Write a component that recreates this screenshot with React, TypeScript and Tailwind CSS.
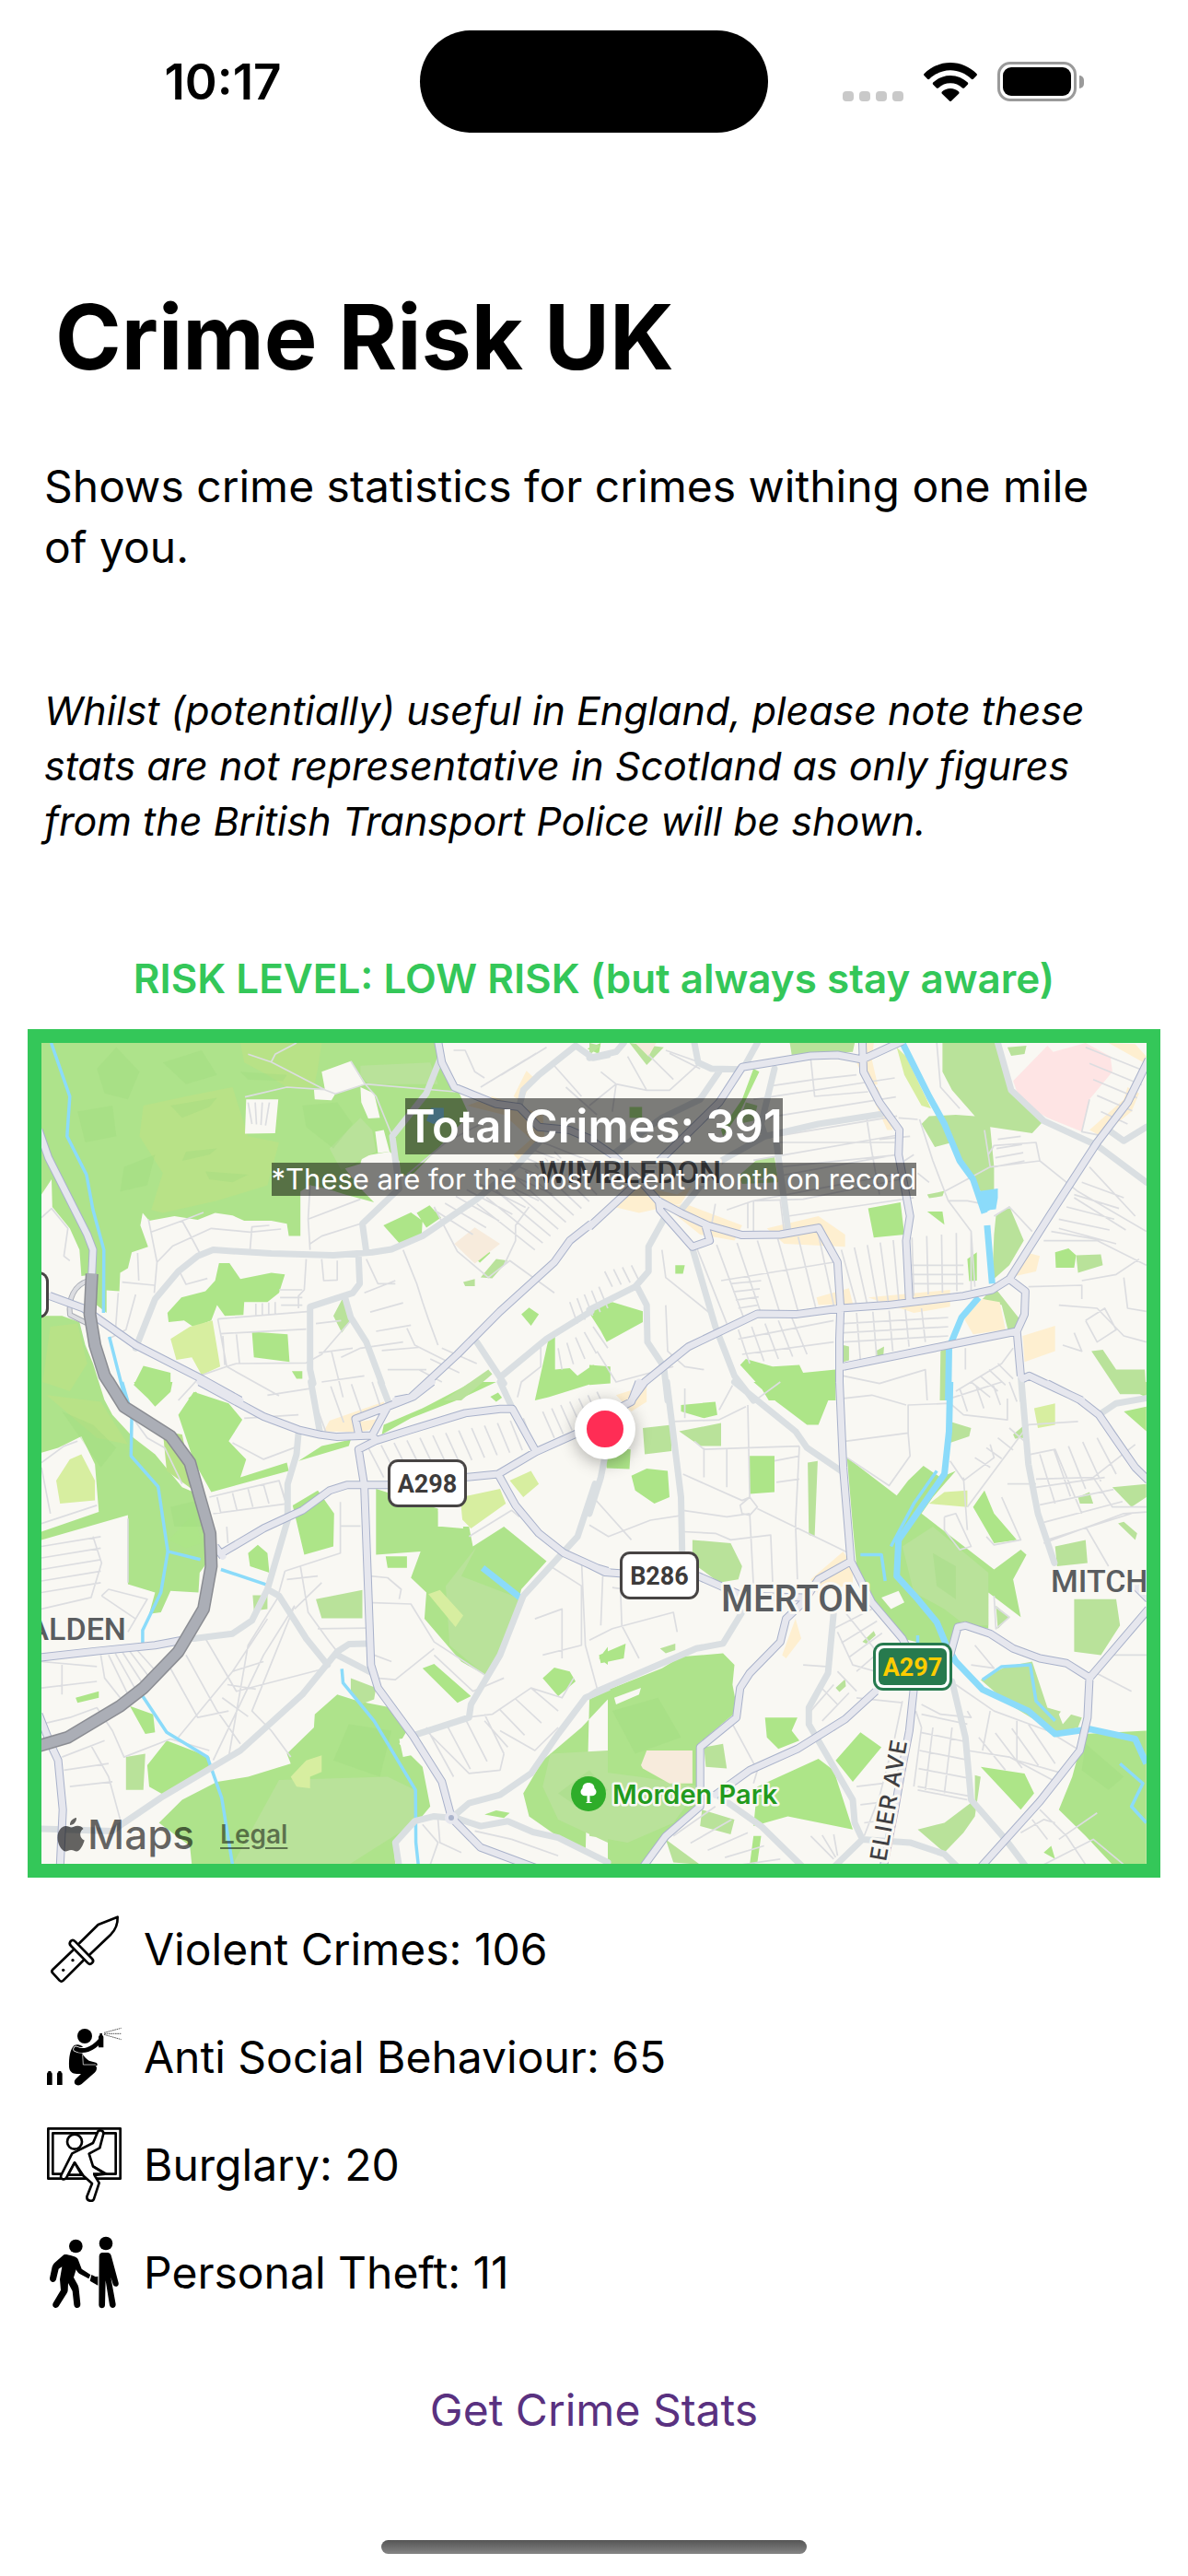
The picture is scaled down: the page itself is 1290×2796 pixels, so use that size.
import React from "react";

/* ---------- Map data: four tiles, each with its own local grid ---------- */

type Tile = "nw" | "ne" | "sw" | "se";
type Shape = [Tile, string];
type Hatch = [Tile, number, number, number, number, number, number, number, number, number];

const GRID: Record<Tile, [number, number, number, number]> = {
  nw: [0, 1020, 0.4209, 0.3333],
  ne: [640, 1020, 0.4145, 0.3333],
  sw: [0, 1500, 0.4209, 0.3571],
  se: [640, 1500, 0.4145, 0.3571],
};

function place(tile: Tile, x: number, y: number) {
  const [ox, oy, sx, sy] = GRID[tile];
  return `${(ox + x * sx).toFixed(1)} ${(oy + y * sy).toFixed(1)}`;
}

function toPath([tile, pts]: Shape, close = false) {
  const d = pts
    .split(" ")
    .map((p) => {
      const [x, y] = p.split(",").map(Number);
      return place(tile, x, y);
    })
    .join("L");
  return "M" + d + (close ? "Z" : "");
}

const lines = (list: Shape[]) => list.map((s) => toPath(s)).join("");
const areas = (list: Shape[]) => list.map((s) => toPath(s, true)).join("");

/* Rungs drawn between two edges: a→b on one side, c→d on the other. */
const rungs = (list: Hatch[]) =>
  list
    .map(([t, ax, ay, bx, by, cx, cy, dx, dy, n]) =>
      Array.from({ length: n }, (_, i) => {
        const k = n === 1 ? 0 : i / (n - 1);
        return (
          "M" + place(t, ax + (bx - ax) * k, ay + (by - ay) * k) +
          "L" + place(t, cx + (dx - cx) * k, cy + (dy - cy) * k)
        );
      }).join(""),
    )
    .join("");

const COMMON: Shape[] = [
  ["nw", "107,336 1128,336 1140,400 1185,500 1210,570 1130,680 1060,770 1035,765 1030,720 1005,690 935,705 930,730 890,745 930,810 965,855 890,830 845,812 800,800 775,820 775,965 745,965 740,925 700,915 630,915 600,898 555,890 510,912 450,900 385,915 368,890 362,930 382,1000 340,1018 330,1070 310,1085 308,1145 275,1142 275,1215 245,1185 240,1090 210,1095 205,1010 180,940 135,870 133,780 107,830"],
  ["nw", "107,1225 160,1225 205,1245 220,1320 240,1380 270,1500 107,1500"],
  ["sw", "107,0 245,0 290,100 345,170 400,220 470,320 510,340 545,480 540,540 515,580 512,640 440,635 415,700 385,705 400,640 330,615 330,405 107,480 107,455 255,395 245,250 210,165 150,200 107,215"],
  ["sw", "740,1130 810,1050 812,1010 870,950 925,970 1010,990 1050,1060 1030,1100 1090,1170 1110,1290 1075,1340 1015,1400 1020,1467 495,1467 490,1410 410,1340 470,1270 560,1215 640,1200 750,1160"],
  ["sw", "1568,965 1500,1050 1400,1150 1350,1250 1365,1320 1425,1370 1568,1452"],
  ["se", "0,965 50,935 190,870 240,835 350,825 380,860 375,920 388,1000 285,1100 290,1290 140,1467 60,1467 -10,1420"],
  ["sw", "970,325 1130,385 1130,440 1210,440 1220,500 1300,440 1410,545 1345,630 1330,700 1280,850 1250,890 1190,850 1095,720 1100,640 1060,595 1085,515 970,525"],
  ["se", "675,230 805,345 835,300 875,255 920,290 960,270 900,350 870,400 1060,570 1130,510 1145,525 1110,600 1130,715 1045,640 1045,750 985,740 960,760 940,850 855,790 820,780 740,670 700,560 690,440"],
  ["se", "1295,1070 1459,1060 1459,1467 1370,1467 1300,1380 1230,1300 1265,1200"],
];

const PARKS: Shape[] = [
  ["nw", "989,930 1060,888 1090,915 1088,960 1030,988"],
  ["nw", "1075,890 1108,865 1138,905 1100,938"],
  ["nw", "1210,1020 1240,988 1265,1020 1238,1052"],
  ["nw", "565,1053 592,1053 620,1105 700,1085 735,1090 720,1150 690,1180 630,1180 628,1222 580,1225 560,1190 545,1240 500,1262 475,1240 435,1245 432,1215 468,1165 530,1145 555,1110"],
  ["nw", "650,1277 742,1285 747,1375 655,1360"],
  ["nw", "345,1450 370,1388 440,1410 440,1470 395,1510"],
  ["nw", "753,1405 780,1405 780,1430 765,1430"],
  ["nw", "1345,1220 1365,1198 1390,1220 1370,1257"],
  ["nw", "1520,1215 1568,1190 1568,1310"],
  ["nw", "1415,1300 1432,1290 1432,1400 1470,1395 1490,1420 1530,1385 1568,1400 1568,1430 1415,1490 1380,1500"],
  ["nw", "485,1495 505,1472 530,1500"],
  ["nw", "1515,355 1550,336 1545,372"],
  ["ne", "0,1205 60,1180 140,1210 140,1245 45,1310"],
  ["ne", "0,1385 55,1390 55,1445 0,1450"],
  ["ne", "225,1060 250,1060 245,1088 225,1088"],
  ["ne", "430,420 445,430 395,560 350,640 345,620 400,520"],
  ["ne", "730,875 815,855 825,960 745,970"],
  ["ne", "885,885 925,885 930,928"],
  ["ne", "990,1040 1015,1018 1015,1110 995,1112"],
  ["ne", "1220,1018 1255,1005 1275,1028 1270,1068 1222,1068"],
  ["ne", "395,1385 410,1365 480,1390 550,1385 560,1410 645,1400 645,1500 470,1500 450,1460"],
  ["ne", "105,545 138,545 138,580 105,580"],
  ["sw", "460,100 500,30 590,65 625,115 590,180 635,235 620,290 740,245 745,270 545,335 500,240"],
  ["sw", "345,0 445,0 440,30 400,75"],
  ["sw", "985,160 1060,110 1190,50 1280,0 1220,0 1090,80 990,130"],
  ["sw", "770,240 830,195 905,175 900,195"],
  ["sw", "755,375 820,330 862,400 860,500 785,525"],
  ["sw", "435,480 500,400 520,490 480,505"],
  ["sw", "640,520 665,495 690,520 695,580 645,560"],
  ["sw", "995,530 1050,530 1050,565 1000,565"],
  ["sw", "1090,870 1120,857 1215,955 1180,975"],
  ["sw", "1400,900 1430,868 1470,880 1485,910 1440,955"],
  ["sw", "195,960 255,940 255,960 200,975"],
  ["sw", "335,985 395,1010 400,1065 375,1070"],
  ["sw", "380,1165 430,1090 540,1140 545,1180 430,1260 385,1230"],
  ["sw", "1250,1315 1280,1302 1315,1310 1300,1325"],
  ["sw", "1545,840 1568,805 1568,860"],
  ["sw", "1265,45 1285,32 1295,48 1280,60"],
  ["se", "420,225 485,225 485,335 420,340"],
  ["se", "110,285 150,263 205,270 210,350 170,370 120,330"],
  ["se", "430,0 645,0 600,130 570,130 490,60"],
  ["se", "240,70 330,60 335,100 300,110 240,90"],
  ["se", "1005,380 1035,330 1060,400 1120,480 1060,490"],
  ["se", "1400,90 1459,75 1459,150"],
  ["se", "460,1020 545,1020 530,1060 550,1090 495,1115 465,1080"],
  ["se", "645,1150 710,1065 765,1110 690,1215"],
  ["se", "440,1230 600,1145 640,1180 690,1360 520,1320 430,1350"],
  ["se", "1025,1170 1140,1190 1165,1250 1130,1300 1090,1250"],
  ["se", "430,1380 450,1380 440,1460 420,1467"],
  ["se", "25,830 95,795 90,840 30,855"],
  ["se", "1190,1430 1210,1410 1220,1450"],
  ["se", "40,200 108,205 105,265 45,262"],
  ["se", "1385,0 1459,0 1459,48"],
];

const SOFT: Shape[] = [
  ["nw", "860,1225 885,1165 905,1240 882,1280"],
  ["nw", "1240,1100 1280,1040 1310,1045 1270,1103"],
  ["nw", "1195,1115 1225,1105 1225,1128 1200,1128"],
  ["nw", "1145,1500 1260,1400 1270,1415 1190,1500"],
  ["nw", "930,410 1110,400 1130,470 950,470 930,440"],
  ["nw", "850,680 930,580 960,620 970,690 880,750"],
  ["nw", "500,610 560,560 610,640 530,650"],
  ["ne", "525,336 695,336 690,365 530,375"],
  ["ne", "105,336 195,350 150,408"],
  ["ne", "0,336 30,345 0,375"],
  ["ne", "925,336 1070,336 1100,480 1190,590 1160,630 1050,610 1060,740 1060,815 1025,820 990,760 950,660 905,675 870,600 890,575 960,570 1010,575 950,490 925,430"],
  ["ne", "410,530 440,540 430,590 390,600"],
  ["ne", "390,770 440,715 485,708 495,790 400,795"],
  ["ne", "1065,900 1100,868 1138,980 1100,1060 1055,1110 1060,960"],
  ["ne", "1275,1028 1340,1025 1345,1060 1280,1085"],
  ["ne", "1060,1130 1130,1240 1100,1290 1080,1190 1030,1170"],
  ["ne", "665,1320 680,1325 680,1370 665,1375"],
  ["ne", "750,1340 772,1325 770,1355 750,1360"],
  ["ne", "1315,1340 1345,1335 1380,1400 1455,1400 1459,1480 1390,1480"],
  ["ne", "920,1340 940,1330 935,1500 918,1500"],
  ["ne", "885,830 930,818 925,835 890,842"],
  ["ne", "1095,350 1145,345 1140,372 1105,378"],
  ["sw", "1230,500 1190,590 1345,660 1300,820 1250,890 1160,800 1150,620"],
  ["sw", "720,1210 1000,1200 1070,1240 1070,1340 900,1467 600,1467"],
  ["sw", "815,660 935,632 935,718 830,718"],
  ["sw", "652,648 690,648 690,690 655,695"],
  ["sw", "905,900 970,930 965,965 930,980 905,940"],
  ["sw", "325,1140 375,1130 370,1240 325,1240"],
  ["sw", "1420,1130 1568,1120 1568,1400 1440,1330 1400,1230"],
  ["se", "0,1180 130,1200 290,1230 220,1340 100,1400 0,1380"],
  ["se", "820,500 900,440 1045,580 1045,740 985,740 930,690 850,640"],
  ["se", "140,140 215,130 215,210 145,220"],
  ["se", "235,150 345,125 345,195 290,195"],
  ["se", "572,245 598,240 590,470 575,465"],
  ["se", "270,480 370,490 400,560 390,600 340,610 270,550"],
  ["se", "945,120 1000,140 995,165 945,185"],
  ["se", "1110,160 1135,135 1138,170 1115,172"],
  ["se", "1220,500 1300,480 1305,550 1225,560"],
  ["se", "1270,660 1380,660 1390,740 1340,830 1270,820"],
  ["se", "1370,320 1459,310 1459,350 1420,380"],
  ["se", "1385,430 1400,425 1435,460 1430,480"],
  ["se", "1280,350 1310,335 1320,370 1285,370"],
  ["se", "1025,905 1090,865 1160,850 1200,990 1290,1020 1280,1050 1220,1065 1100,980"],
  ["se", "860,1360 930,1340 1010,1270 1010,1195 1025,1200 1010,1320 980,1370 930,1430"],
  ["se", "185,810 225,795 225,815 200,825"],
  ["se", "715,790 745,757 750,770 725,795"],
  ["se", "645,930 670,903 672,925 655,942"],
  ["se", "295,1300 380,1330 370,1375 290,1350"],
  ["se", "300,1110 350,1100 360,1175 305,1170"],
  ["se", "200,1390 290,1467 220,1460"],
  ["se", "1065,680 1100,715 1070,750"],
];

const OLIVE: Shape[] = [
  ["nw", "620,336 830,336 820,420 810,480 740,480 690,440 630,400"],
  ["nw", "370,540 480,510 600,480 640,640 720,660 690,800 560,850 420,890 390,880 420,760 360,640"],
  ["nw", "130,1260 200,1250 225,1380 180,1470 110,1440"],
  ["sw", "120,40 260,60 330,190 250,170"],
  ["sw", "420,150 470,160 500,330 430,270"],
];

const LIME: Shape[] = [
  ["nw", "440,1300 490,1260 548,1240 568,1390 520,1418 495,1360 455,1368"],
  ["ne", "805,350 830,380 895,550 870,540 825,440"],
  ["sw", "145,300 180,235 210,220 245,300 245,360 155,370"],
  ["sw", "1105,645 1135,632 1195,710 1175,745"],
  ["sw", "1190,350 1290,325 1305,370 1215,445 1190,415"],
  ["sw", "1315,300 1370,270 1390,310 1350,350"],
  ["sw", "750,1200 790,1150 830,1135 830,1185 800,1200 800,1235 765,1230"],
  ["se", "890,370 930,335 990,330 990,380"],
  ["se", "1165,80 1220,65 1220,130 1175,140"],
];

const BUILT: Shape[] = [
  ["nw", "830,430 905,395 940,470 865,502 855,523 812,520 810,488 838,485"],
  ["nw", "635,520 718,520 710,630 632,632"],
  ["nw", "930,480 965,500 980,580 950,582 932,530"],
  ["nw", "968,625 990,620 1005,690 975,695"],
  ["sw", "1130,390 1190,385 1195,445 1140,440"],
  ["sw", "1030,1085 1060,1080 1080,1130 1040,1140"],
  ["se", "65,960 135,930 130,950 70,980"],
  ["se", "765,655 810,635 825,670 790,690"],
  ["se", "1230,1010 1245,985 1270,1000 1240,1040"],
];

const SHOPS: Shape[] = [
  ["nw", "1325,510 1358,427 1378,450 1345,530"],
  ["nw", "1205,540 1270,510 1400,570 1405,640 1340,720 1325,700 1370,650 1300,570"],
  ["ne", "700,400 740,390 755,470 730,480"],
  ["ne", "715,336 745,336 740,400 715,390"],
  ["ne", "730,480 755,480 795,620 780,620"],
  ["ne", "65,870 120,800 230,830 270,800 240,860 130,890"],
  ["ne", "250,860 400,930 380,980 290,960 200,870"],
  ["ne", "465,940 600,900 670,960 670,1000 510,990"],
  ["ne", "595,1165 680,1135 690,1185 600,1190"],
  ["ne", "730,1165 945,1140 945,1195 850,1215"],
  ["ne", "975,1220 1030,1170 1075,1180 1090,1270 1005,1285"],
  ["ne", "1135,1290 1220,1257 1220,1340 1140,1375"],
  ["ne", "1150,1020 1180,1030 1170,1080 1100,1100"],
  ["ne", "1360,336 1430,340 1459,380 1459,405"],
  ["ne", "1410,480 1440,500 1420,560 1340,640 1310,620 1400,520"],
  ["sw", "835,150 850,118 990,60 1000,80 930,120 990,110 970,140 930,152"],
  ["se", "580,600 665,515 690,560 690,610 600,650"],
  ["se", "505,830 540,720 555,780 515,840"],
  ["se", "70,40 150,10 150,60 110,90"],
];

const SAND: Shape[] = [
  ["nw", "1172,990 1225,937 1290,990 1225,1055"],
  ["se", "135,1165 150,1120 270,1120 270,1220 210,1220 140,1175"],
  ["ne", "120,336 175,336 155,380"],
];

const HOSPITAL: Shape[] = [["ne", "1110,460 1200,345 1215,365 1300,336 1365,380 1370,430 1310,520 1290,625 1200,580 1130,530"]];

const STREAMS: Shape[] = [
  ["nw", "132,336 180,510 173,640 223,765 240,880 268,1010 267,1215"],
  ["nw", "282,1293 322,1490"],
  ["sw", "315,0 340,100 338,225 408,318 433,515 415,640 368,755 368,795"],
  ["sw", "433,515 517,540"],
  ["sw", "570,570 690,617"],
  ["sw", "368,955 430,1065 535,1140 572,1265 600,1467"],
  ["sw", "882,872 885,915 965,1030 1072,1240 1073,1400 1079,1467"],
  ["se", "910,270 850,370 790,500"],
  ["se", "710,525 765,525 775,605"],
  ["se", "1030,905 1080,865 1155,860 1170,970 1220,1030"],
  ["se", "1390,1160 1450,1220 1420,1290 1459,1340"],
  ["se", "860,770 860,800"],
];

const RIVER: Shape[] = [
  ["ne", "820,336 890,510 930,600 970,720 1005,780 1035,890"],
  ["ne", "1042,930 1055,1120"],
  ["ne", "1020,1165 975,1230 955,1290 942,1330 940,1500"],
  ["se", "945,0 942,150 930,280 870,380 810,480 805,590 860,660 910,730 935,800 960,850 1030,935 1150,1000 1220,1070 1310,1055 1430,1085 1459,1160"],
  ["sw", "1245,565 1342,655"],
];

const POND: Shape[] = [["ne", "1015,820 1070,810 1070,840 1065,878 1050,880 1035,890"], ["nw", "1100,590 1112,548 1145,548 1145,590 1118,600"]];

const MOTORWAY: Shape[] = [
  ["nw", "237,1088 232,1220 245,1320 270,1420 290,1460"],
  ["sw", "278,-5 320,75 440,165 490,245 520,370 542,460 545,560 525,690 460,820 370,930 310,985 175,1080 100,1106"],
];

const MAJOR: Shape[] = [
  ["nw", "100,620 125,710 225,960 240,1010 237,1088"],
  ["nw", "128,1160 215,1200 350,1320 520,1430 620,1500"],
  ["sw", "515,0 680,105 770,145 825,160 870,167 960,162 1000,75 1065,45 1115,0"],
  ["sw", "925,155 917,112 1000,75"],
  ["sw", "960,162 970,178 925,205 940,315 957,860 975,930 1065,1075 1140,1215 1165,1325 1240,1415 1400,1485"],
  ["sw", "970,178 1060,145 1200,95 1290,82 1322,82 1383,212"],
  ["sw", "572,520 680,445 780,390 850,330 895,313 1000,313 1285,280 1383,212 1500,150 1560,140"],
  ["sw", "575,530 555,500"],
  ["sw", "1285,280 1330,375 1390,460 1455,520 1540,565 1568,575"],
  ["sw", "100,838 250,818 400,800 470,785"],
  ["sw", "100,1010 130,1100 150,1150 162,1300 155,1475"],
  ["nw", "1130,330 1140,400 1172,480 1280,535 1340,545 1390,610 1470,620 1525,650"],
  ["nw", "1020,1500 1060,1490 1180,1350 1290,1210 1430,1050 1470,980 1525,925"],
  ["ne", "0,650 60,700 130,780 180,850 240,890 310,930 400,962 500,960 600,938 650,1050 658,1200"],
  ["ne", "0,935 100,820 250,640 340,530 400,415 580,378 650,375 715,390 820,330"],
  ["ne", "715,330 718,430 760,530 812,620 810,700 840,900 830,980 838,1180"],
  ["ne", "110,1500 145,1440 200,1385 260,1325 440,1218 540,1220 658,1200 780,1190 980,1160 1055,1140 1100,1105 1210,890 1330,660 1410,530 1465,390"],
  ["ne", "658,1200 655,1300 655,1440"],
  ["ne", "1100,1105 1142,1145 1140,1220 1120,1275 940,1320 665,1390"],
  ["ne", "1120,1275 1130,1420"],
  ["ne", "1135,1430 1152,1420 1220,1460 1290,1500"],
  ["ne", "182,850 185,880 270,1000 315,980 305,935"],
  ["se", "0,135 60,90 110,60 130,0"],
  ["se", "655,0 665,260 685,545 740,670 820,780 850,850"],
  ["se", "0,555 40,578 80,582 285,590 340,618 400,650 560,655"],
  ["se", "685,545 600,600 560,670 515,720 500,790 420,885 395,930 385,1020 290,1110 290,1290 200,1380 140,1475"],
  ["se", "1200,5 1285,55 1335,100 1370,160 1430,260 1465,300"],
  ["se", "1465,690 1310,900 1305,1020 1285,1120 1180,1275 1025,1475"],
  ["se", "945,830 965,745 985,740 1050,765 1110,810 1180,840 1250,855 1312,900"],
  ["se", "850,930 838,1060 815,1200 800,1300 770,1475"],
  ["se", "750,940 670,1025 545,1115 420,1180 330,1255"],
  ["se", "1465,660 1430,620"],
];

const MEDIUM: Shape[] = [
  ["nw", "350,1330 400,1170 460,1080 510,1030 550,1010 700,1022 860,1028 960,1018 1010,1008 1090,965 1230,845 1330,740 1390,660"],
  ["nw", "945,1018 935,925 1030,810 1012,640 1100,500 1135,390"],
  ["nw", "925,1030 928,1120 910,1150 800,1195 800,1400 808,1445"],
  ["nw", "890,1165 905,1230 945,1310 985,1445"],
  ["nw", "1340,540 1350,490 1390,440 1485,345 1530,385 1568,375"],
  ["nw", "1230,1310 1290,1425 1300,1445"],
  ["nw", "1290,1425 1410,1300 1525,1210"],
  ["ne", "0,385 70,365 90,336"],
  ["ne", "275,336 285,400 320,420 400,422"],
  ["ne", "340,430 290,520 190,580 60,700"],
  ["ne", "440,336 405,415"],
  ["ne", "485,420 450,600 460,640"],
  ["ne", "240,880 345,720 460,640 600,600 765,568"],
  ["ne", "490,660 520,940"],
  ["ne", "195,910 155,1000 155,1080 120,1130 0,1205"],
  ["ne", "125,1130 150,1190 152,1310 195,1390 205,1500"],
  ["ne", "270,1005 330,1260 380,1420 430,1500"],
  ["ne", "1070,336 1105,490 1190,590 1330,670 1459,790"],
  ["ne", "1360,620 1400,655 1459,610"],
  ["ne", "1130,1420 1135,1500"],
  ["se", "1132,0 1150,250 1175,400 1218,550"],
  ["se", "203,0 240,350 243,515"],
  ["se", "380,0 540,150 570,200 665,275"],
  ["se", "40,230 30,290 0,400"],
  ["se", "400,700 350,795 280,810 20,940 0,955"],
  ["se", "640,700 625,885 575,990 575,1040 690,1270 695,1340 715,1390 840,1400 930,1435 965,1475"],
  ["se", "715,1390 640,1475"],
  ["se", "340,1260 450,1350 560,1475"],
  ["se", "950,910 985,1080 1000,1270 1090,1390 1145,1475"],
  ["se", "1335,100 1380,65 1465,48"],
  ["sw", "1535,310 1490,470 1350,650 1290,830 1215,980 1210,1020 1065,1075"],
  ["sw", "1568,930 1510,960 1440,1070 1370,1190 1290,1255 1210,1280 1170,1320"],
  ["sw", "1165,1325 1120,1320 1070,1335 1020,1400 1030,1475"],
  ["sw", "1175,1325 1240,1350 1310,1335 1375,1368 1440,1385 1568,1460"],
  ["sw", "770,155 765,220 742,310 742,420 690,630 650,725 600,765 500,780"],
  ["sw", "690,630 720,650 790,780 845,860"],
  ["sw", "945,795 900,797 870,820 780,950 620,1120 420,1260 320,1340"],
  ["sw", "320,1340 290,1365 107,1358"],
  ["sw", "870,830 960,885"],
  ["sw", "802,0 825,150"],
  ["sw", "982,0 1005,70"],
  ["sw", "1290,0 1322,80"],
];

const MINOR: Shape[] = [
  ["nw", "640,373 700,398 840,490 865,502 942,470 1175,495"],
  ["nw", "765,336 710,373 700,398"],
  ["nw", "632,512 740,480 838,488"],
  ["nw", "942,470 970,510 1012,640"],
  ["nw", "905,395 942,470"],
  ["nw", "1050,765 1150,660 1240,600"],
  ["nw", "107,905 133,875 175,940 165,1030 180,1045"],
  ["nw", "383,910 405,1050 398,1150"],
  ["nw", "405,1050 445,998 545,940 645,952 725,942"],
  ["nw", "390,952 470,915 525,888"],
  ["nw", "645,1010 650,935 695,930"],
  ["nw", "470,915 490,960 515,1020"],
  ["nw", "800,800 795,910 930,845"],
  ["nw", "795,910 800,1010"],
  ["nw", "800,990 830,965 930,925"],
  ["nw", "562,1235 800,1210"],
  ["nw", "562,1235 585,1390 610,1380 790,1378 830,1350 905,1240"],
  ["nw", "568,1283 790,1268"],
  ["nw", "585,1390 520,1418 460,1500"],
  ["nw", "585,1390 720,1485"],
  ["nw", "465,1085 480,1122 535,1103"],
  ["nw", "355,1020 358,1110"],
  ["nw", "315,1115 398,1125"],
  ["nw", "305,1150 298,1270"],
  ["nw", "350,1155 325,1270 280,1300"],
  ["nw", "790,1040 785,1140 770,1160 770,1200"],
  ["nw", "830,1040 835,1110 870,1108 870,1045"],
  ["nw", "1040,1010 1075,1120 1090,1180 1105,1235 1130,1320"],
  ["nw", "945,1040 975,1120 1020,1120"],
  ["nw", "1120,870 1180,1015 1260,1100 1315,1045 1430,1150"],
  ["nw", "1365,870 1330,930 1330,980 1300,1060"],
  ["nw", "880,1360 930,1330 1040,1310"],
  ["nw", "855,1340 885,1490"],
  ["nw", "1050,1265 1070,1320 1165,1380"],
  ["nw", "1170,360 1200,360 1225,430 1250,450"],
  ["nw", "1460,480 1540,570"],
  ["nw", "1430,410 1500,510"],
  ["nw", "1395,1325 1395,1390 1345,1440 1335,1490"],
  ["ne", "200,360 290,400 210,490 150,490 70,470 30,430"],
  ["ne", "0,540 70,470 60,560"],
  ["ne", "480,475 590,455 700,440"],
  ["ne", "580,390 590,510 730,495"],
  ["ne", "725,570 740,690 760,830"],
  ["ne", "490,660 800,660"],
  ["ne", "500,740 810,700"],
  ["ne", "430,850 560,845 815,780"],
  ["ne", "520,900 850,840"],
  ["ne", "345,1110 640,1050"],
  ["ne", "360,880 430,850 430,950"],
  ["ne", "865,585 900,720 940,850 1000,950 1010,1130"],
  ["ne", "860,585 810,580"],
  ["ne", "940,850 990,850 1030,860"],
  ["ne", "1035,620 1050,740 930,820"],
  ["ne", "1050,740 1180,720 1170,660 1060,670 1045,700"],
  ["ne", "1180,720 1280,820 1459,950"],
  ["ne", "1060,900 1100,870 1160,950"],
  ["ne", "1190,980 1330,980 1459,1060"],
  ["ne", "1290,1110 1380,1090 1440,1040"],
  ["ne", "1150,1130 1290,1125 1290,1170"],
  ["ne", "910,336 920,480 970,550"],
  ["ne", "190,1010 200,1100 330,1230"],
  ["ne", "200,1190 205,1340 250,1390 300,1400"],
  ["ne", "20,1340 70,1440 220,1390"],
  ["ne", "665,1420 760,1445 880,1400 885,1500"],
  ["ne", "985,1330 985,1400"],
  ["ne", "960,1470 1080,1380 1110,1330"],
  ["ne", "1230,1190 1330,1200 1400,1290 1459,1310"],
  ["ne", "1300,1240 1350,1200 1380,1270 1330,1310 1300,1240"],
  ["ne", "1240,1320 1290,1340 1270,1280"],
  ["ne", "1400,1100 1410,1200 1459,1210"],
  ["ne", "1310,520 1290,625 1350,640"],
  ["sw", "107,245 165,195 200,180"],
  ["sw", "107,260 130,400"],
  ["sw", "107,430 250,375"],
  ["sw", "330,415 330,610"],
  ["sw", "240,470 262,550 235,655 107,690"],
  ["sw", "262,650 280,630 380,660 350,720"],
  ["sw", "262,650 350,720 330,760"],
  ["sw", "330,90 380,170 425,200 470,310"],
  ["sw", "540,350 720,300 740,370 550,400"],
  ["sw", "585,440 588,490"],
  ["sw", "878,365 878,520 735,575"],
  ["sw", "878,438 930,438"],
  ["sw", "775,560 795,700 850,790 870,820"],
  ["sw", "820,750 945,748"],
  ["sw", "945,670 1060,675 1120,790 1250,890"],
  ["sw", "955,590 1000,595 1035,630 1030,660"],
  ["sw", "970,900 1020,905 1120,810"],
  ["sw", "965,830 1010,850"],
  ["sw", "735,575 720,640"],
  ["sw", "760,680 680,830 550,1150"],
  ["sw", "760,680 650,1000 700,1060 750,1140"],
  ["sw", "720,650 640,800 590,1140"],
  ["sw", "430,850 510,1020 590,1000"],
  ["sw", "480,830 560,1000"],
  ["sw", "530,780 610,940 840,870"],
  ["sw", "460,1080 600,880 690,720"],
  ["sw", "260,830 270,900 310,960"],
  ["sw", "107,850 250,865"],
  ["sw", "107,930 250,910"],
  ["sw", "160,860 160,950"],
  ["sw", "107,1040 180,1020 250,990 290,1060 320,1140 440,1085 540,1120"],
  ["sw", "160,1140 270,1090"],
  ["sw", "235,1105 280,1200 310,1330"],
  ["sw", "165,1180 280,1160"],
  ["sw", "180,1230 290,1215"],
  ["sw", "1100,1060 1210,1190 1290,1180 1300,1130"],
  ["sw", "1200,1020 1270,1010 1370,930 1450,960 1480,900"],
  ["sw", "1300,900 1220,940 1120,830"],
  ["sw", "1290,1060 1380,1120 1440,1050"],
  ["sw", "1210,470 1320,390 1340,410"],
  ["sw", "1500,540 1510,800 1540,930"],
  ["sw", "1420,560 1500,620 1500,800 1400,830"],
  ["sw", "1380,720 1450,690 1450,840"],
  ["sw", "1225,1365 1320,1390 1440,1440"],
  ["sw", "1090,1345 1130,1400 1110,1467"],
  ["sw", "1130,1330 1135,1400 1190,1430"],
  ["sw", "690,40 800,20"],
  ["sw", "630,110 770,100"],
  ["sw", "600,185 680,235 770,195"],
  ["se", "0,435 50,470 160,420 245,405"],
  ["se", "10,350 110,480"],
  ["se", "245,280 400,360 420,350 440,380 420,405 400,400 395,375 420,350"],
  ["se", "245,390 360,410 420,400"],
  ["se", "440,385 680,520"],
  ["se", "420,400 430,620"],
  ["se", "245,455 330,460 370,480 475,465 480,610"],
  ["se", "550,195 540,430 545,600"],
  ["se", "485,240 550,225"],
  ["se", "490,305 550,295"],
  ["se", "220,120 340,115 410,75"],
  ["se", "415,70 420,350"],
  ["se", "275,180 300,205 420,200 550,195"],
  ["se", "670,180 835,155 835,70 945,65"],
  ["se", "835,155 840,225 785,315 675,230"],
  ["se", "665,50 740,40 830,70"],
  ["se", "945,50 1080,0"],
  ["se", "945,65 980,100 1095,115 1095,50"],
  ["se", "945,240 980,300 1060,230 1050,190"],
  ["se", "980,290 990,450"],
  ["se", "930,410 960,400 1000,500 970,510 930,450 930,410"],
  ["se", "990,380 1150,130 1280,120"],
  ["se", "1155,220 1220,205 1290,400"],
  ["se", "1170,295 1320,290 1430,190"],
  ["se", "1320,290 1370,380 1459,380"],
  ["se", "1190,490 1400,400 1459,395"],
  ["se", "1300,440 1360,560"],
  ["se", "1080,350 1130,480 1060,495 1040,470"],
  ["se", "1095,310 1170,310"],
  ["se", "0,785 60,750 220,700 230,760"],
  ["se", "80,590 85,740 130,840"],
  ["se", "35,590 30,740"],
  ["se", "60,625 210,650"],
  ["se", "670,700 760,830"],
  ["se", "650,760 690,860 750,880"],
  ["se", "560,860 620,865"],
  ["se", "600,920 650,980"],
  ["se", "650,880 700,940"],
  ["se", "870,980 920,1010 1000,1020 990,1000"],
  ["se", "960,920 1060,1000 1200,1060 1285,1120"],
  ["se", "860,1240 990,1270"],
  ["se", "1050,1000 1030,1120"],
  ["se", "1120,1030 1120,1150 1240,1190"],
  ["se", "990,1120 1100,1140 1230,1220"],
  ["se", "1320,880 1420,940"],
  ["se", "1350,830 1459,830"],
  ["se", "1180,1300 1250,1380 1300,1467"],
  ["se", "1160,1330 1200,1390"],
  ["se", "1130,1370 1190,1330 1220,1340"],
  ["se", "820,970 800,1080 760,1260 720,1380"],
  ["se", "700,960 820,975"],
  ["se", "855,1000 870,1050 850,1230"],
  ["se", "375,1040 440,1180 430,1220"],
  ["se", "1000,860 1060,870 1010,800"],
  ["se", "1060,650 1065,750 1100,715 1060,680"],
  ["se", "1230,1390 1330,1310"],
  ["se", "1190,1467 1320,1390 1400,1467"],
];

const HATCHES: Hatch[] = [
  ["nw", 1120, 880, 1400, 660, 1220, 960, 1560, 740, 11],
  ["nw", 1230, 860, 1430, 690, 1380, 1010, 1540, 830, 9],
  ["nw", 1020, 1110, 1100, 1400, 940, 1150, 1000, 1400, 5],
  ["nw", 815, 1250, 830, 1440, 880, 1240, 940, 1420, 3],
  ["nw", 720, 1140, 725, 1190, 780, 1140, 780, 1190, 3],
  ["nw", 660, 1185, 710, 1180, 660, 1222, 710, 1220, 4],
  ["nw", 1080, 1400, 1140, 1330, 1140, 1440, 1230, 1380, 3],
  ["nw", 1470, 1180, 1545, 1130, 1490, 1250, 1568, 1200, 5],
  ["nw", 640, 530, 695, 530, 650, 600, 685, 605, 4],
  ["nw", 575, 1290, 610, 1285, 580, 1385, 618, 1380, 2],
  ["nw", 1440, 1330, 1530, 1260, 1450, 1400, 1568, 1330, 5],
  ["nw", 1410, 350, 1330, 410, 1320, 420, 1240, 480, 4],
  ["ne", 100, 380, 210, 370, 150, 490, 290, 420, 3],
  ["ne", 430, 520, 430, 850, 800, 450, 815, 760, 6],
  ["ne", 330, 860, 500, 850, 320, 930, 510, 950, 3],
  ["ne", 280, 1000, 600, 960, 360, 1250, 640, 1190, 7],
  ["ne", 660, 1010, 830, 970, 700, 1190, 838, 1170, 6],
  ["ne", 845, 970, 1000, 950, 850, 1160, 1000, 1140, 5],
  ["ne", 840, 1060, 840, 1120, 980, 1060, 980, 1120, 3],
  ["ne", 700, 1215, 870, 1200, 710, 1370, 880, 1310, 5],
  ["ne", 665, 1250, 665, 1310, 940, 1230, 940, 1290, 3],
  ["ne", 390, 1270, 530, 1230, 420, 1380, 570, 1350, 5],
  ["ne", 390, 1300, 400, 1350, 640, 1240, 640, 1310, 2],
  ["ne", 1290, 790, 1210, 950, 1400, 840, 1350, 980, 5],
  ["ne", 1310, 740, 1230, 940, 1430, 900, 1380, 990, 3],
  ["ne", 1300, 350, 1340, 560, 1459, 430, 1410, 600, 5],
  ["ne", 1070, 650, 1060, 740, 1130, 640, 1140, 720, 4],
  ["ne", 40, 1080, 110, 1060, 60, 1130, 130, 1110, 4],
  ["ne", 370, 1120, 390, 1200, 450, 1110, 440, 1190, 4],
  ["ne", 840, 640, 860, 760, 760, 650, 890, 790, 3],
  ["ne", 1000, 1440, 1070, 1380, 1050, 1490, 1110, 1430, 4],
  ["sw", 950, 200, 1350, 110, 990, 290, 1380, 200, 13],
  ["sw", 1400, 90, 1540, 30, 1430, 170, 1568, 100, 7],
  ["sw", 107, 500, 107, 640, 260, 470, 260, 610, 5],
  ["sw", 280, 830, 350, 810, 330, 950, 410, 890, 5],
  ["sw", 560, 350, 720, 300, 570, 400, 735, 360, 5],
  ["sw", 800, 20, 960, 0, 840, 150, 980, 70, 4],
  ["sw", 1100, 1050, 1250, 1010, 1170, 1200, 1300, 1130, 4],
  ["sw", 1250, 1030, 1370, 930, 1310, 1110, 1440, 1000, 4],
  ["sw", 600, 880, 560, 1000, 680, 850, 620, 1100, 4],
  ["sw", 740, 600, 760, 690, 820, 590, 830, 610, 2],
  ["se", 250, 20, 500, 0, 250, 110, 430, 60, 3],
  ["se", 300, 200, 360, 200, 300, 290, 360, 320, 2],
  ["se", 1010, 230, 1100, 140, 1050, 260, 1140, 180, 4],
  ["se", 1180, 220, 1330, 170, 1220, 370, 1380, 280, 5],
  ["se", 1170, 320, 1200, 480, 1350, 290, 1420, 400, 4],
  ["se", 870, 1010, 860, 1230, 990, 1040, 1000, 1260, 5],
  ["se", 900, 1050, 950, 1050, 880, 1240, 930, 1250, 2],
  ["se", 1020, 1080, 1150, 1040, 1090, 1180, 1220, 1160, 4],
  ["se", 640, 750, 700, 880, 740, 690, 780, 800, 4],
  ["se", 580, 1000, 640, 1060, 640, 920, 720, 970, 3],
  ["se", 700, 1230, 720, 1340, 770, 1220, 790, 1330, 3],
  ["se", 220, 1380, 400, 1467, 330, 1290, 500, 1450, 5],
  ["se", 970, 20, 1100, 0, 990, 90, 1120, 60, 4],
  ["se", 580, 1380, 640, 1375, 640, 1450, 650, 1440, 3],
];

const FACETS: Shape[] = [
  ["nw", "250,420 300,350 360,430 330,520 270,500"],
  ["nw", "420,400 520,360 560,440 480,470"],
  ["nw", "200,560 290,540 300,640 220,660"],
  ["nw", "620,430 740,440 730,460 640,455"],
  ["nw", "440,540 560,515 540,545 470,580"],
  ["nw", "780,540 870,530 910,600 860,680 790,610"],
  ["nw", "530,755 640,765 600,790 540,780"],
  ["nw", "480,690 560,680 540,700 470,720"],
  ["nw", "320,740 400,700 380,800 310,820"],
  ["sw", "160,90 240,130 300,200 260,260"],
  ["sw", "440,380 510,360 530,440 450,440"],
  ["sw", "860,1150 980,1200 1010,1060 900,1040"],
  ["sw", "1440,1250 1520,1180 1568,1240 1500,1300"],
  ["se", "900,520 960,560 960,660 910,620"],
  ["se", "60,1000 180,960 240,1080 120,1130"],
  ["se", "1300,1100 1400,1200 1360,1240 1290,1180"],
];

function RoadShield({ x, y, label, primary }: { x: number; y: number; label: string; primary?: boolean }) {
  return (
    <g>
      <rect x={x} y={y} width="86" height="52" rx="11" fill={primary ? "#277a4e" : "#474444"} />
      <rect x={x + 3} y={y + 3} width="80" height="46" rx="8" fill="#fff" />
      {primary && <rect x={x + 6} y={y + 6} width="74" height="40" rx="6" fill="#277a4e" />}
      <text
        x={x + 43}
        y={y + 36}
        textAnchor="middle"
        className="font-['Roboto',sans-serif] text-[27px] font-bold"
        fill={primary ? "#ffcc00" : "#3d3b3b"}
      >
        {label}
      </text>
    </g>
  );
}

function PlaceName({ x, y, large, end, children }: { x: number; y: number; large?: boolean; end?: boolean; children: string }) {
  return (
    <text
      x={x}
      y={y}
      textAnchor={end ? "end" : "start"}
      fill="#5a5d60"
      stroke="#f9f8f3"
      strokeWidth="6"
      strokeLinejoin="round"
      paintOrder="stroke"
      className={
        large
          ? "font-['Roboto',sans-serif] text-[40px] font-medium"
          : "font-['Roboto',sans-serif] text-[34px] font-medium"
      }
    >
      {children}
    </text>
  );
}

function StreetMap() {
  return (
    <svg viewBox="45 1132 1200 891" className="block h-auto w-full" role="img" aria-label="Map of Wimbledon and Merton">
      <rect x="45" y="1132" width="1200" height="892" fill="#f9f8f3" />
      <path d={areas(COMMON)} fill="#aee38b" />
      <path d={areas(PARKS)} fill="#ade588" />
      <path d={areas(SOFT)} fill="#b9e29a" />
      <path d={areas(OLIVE)} fill="#b8e287" />
      <path d={areas(FACETS)} fill="#9fdb7d" opacity="0.35" />
      <path d={areas(LIME)} fill="#d7eea0" />
      <path d={areas(BUILT)} fill="#f9f8f3" />
      <path d={areas(SHOPS)} fill="#feefd0" />
      <path d={areas(SAND)} fill="#f7ebdc" />
      <path d={areas(HOSPITAL)} fill="#fee4e4" />
      <g fill="none" strokeLinejoin="round">
        <path d={lines(MINOR) + rungs(HATCHES)} stroke="#dcdde0" strokeWidth="1.7" />
        <path d={lines(STREAMS)} stroke="#8bdbfa" strokeWidth="3.5" />
        <path d={lines(RIVER)} stroke="#8bdbfa" strokeWidth="7" />
        <path d={areas(POND)} fill="#8bdbfa" />
        <path d={lines(MEDIUM)} stroke="#dadfe2" strokeWidth="7" strokeLinecap="round" />
        <path d="M96 1390C80 1395 74 1410 76 1427L94 1436" stroke="#a9adb5" strokeWidth="6" />
        <path d="M96 1390C80 1395 74 1410 76 1427L94 1436" stroke="#dcdde1" strokeWidth="4" />
        <path d={lines(MAJOR)} stroke="#a8b1ca" strokeWidth="9" />
        <path d={lines(MAJOR)} stroke="#e6e7ee" strokeWidth="7" strokeLinecap="round" />
        <path d={lines(MOTORWAY)} stroke="#8b8d93" strokeWidth="14" />
        <path d={lines(MOTORWAY)} stroke="#abaeb6" strokeWidth="11" />
      </g>
      <circle cx="490" cy="1973" r="7" fill="#e6e7ee" />
      <circle cx="490" cy="1973" r="3" fill="#abb4cc" />

      <rect x="-20" y="1380" width="73" height="51" rx="11" fill="#474444" />
      <rect x="-17" y="1383" width="67" height="45" rx="8" fill="#fff" />

      <PlaceName x={585} y={1284}>WIMBLEDON</PlaceName>
      <PlaceName x={783} y={1749} large>MERTON</PlaceName>
      <PlaceName x={1141} y={1728}>MITCH</PlaceName>
      <PlaceName x={137} y={1780} end>ALDEN</PlaceName>
      <text
        transform="translate(962 2021) rotate(-80)"
        fill="#3f3f42"
        stroke="#f9f8f3"
        strokeWidth="6"
        strokeLinejoin="round"
        paintOrder="stroke"
        className="font-['Inter',sans-serif] text-[25px] font-medium tracking-wider"
      >
        ELIER AVE
      </text>

      <RoadShield x={421} y={1584} label="A298" />
      <RoadShield x={673} y={1684} label="B286" />
      <RoadShield x={948} y={1783} label="A297" primary />

      <circle cx="639" cy="1947" r="19" fill="#2fad2a" />
      <path
        d="M637.5 1956v-7c-4 1-7-1-7-4 0-2 1-3 2-4 0-4 3-6 6.500-6s6.500 2 6.500 6c1 1 2 2 2 4 0 3-3 5-7 4v7h2v1h-6v-1z"
        fill="#fff"
      />
      <text
        x="665"
        y="1958"
        fill="#229a1d"
        stroke="#f9f8f3"
        strokeWidth="5"
        strokeLinejoin="round"
        paintOrder="stroke"
        className="font-['Inter',sans-serif] text-[29px] font-semibold"
      >
        Morden Park
      </text>
    </svg>
  );
}

/* ---------- Icons ---------- */

function KnifeIcon() {
  return (
    <svg viewBox="60 45 246 246" className="size-[82px] shrink-0" fill="none" stroke="#000" strokeWidth="8" strokeLinejoin="round" strokeLinecap="round">
      <path d="M169 147L230 87L293 62C294 84 286 104 271 119L203 184" />
      <path d="M140 141c5-5 11-3 15 1l55 56c4 4 4 10 0 14s-10 4-14 0l-55-56c-4-4-5-10-1-15z" />
      <path d="M147 171L82 233c-4 4-4 8 0 12l22 24c4 4 8 4 12 0L181 204" />
      <circle cx="147" cy="203" r="5" fill="#000" stroke="none" />
      <circle cx="116" cy="235" r="5" fill="#000" stroke="none" />
    </svg>
  );
}

function SprayIcon() {
  return (
    <svg viewBox="60 396 246 246" className="size-[82px] shrink-0">
      <circle cx="186" cy="450" r="24" />
      <path d="M63 609v-36q0-4 4-5v-4h9v4q4 1 4 5v36zM96 609v-36q0-4 4-5v-4h9v4q4 1 4 5v36z" />
      <path d="M152 480C138 492 134 520 135 550C136 566 146 573 160 573H174L156 590C150 597 152 606 159 609C165 612 171 610 176 606L218 569C228 560 228 545 214 543L182 542L226 546C229 541 226 537 222 536L200 530C190 524 184 516 178 508L181 486C172 476 160 476 152 480z" />
      <path d="M158 492C176 500 206 496 236 466" fill="none" stroke="#fff" strokeWidth="20" strokeLinecap="round" />
      <path d="M158 492C180 503 210 495 237 464" fill="none" stroke="#000" strokeWidth="15" strokeLinecap="round" />
      <path d="M178 508C182 522 192 534 222 542L180 544z" />
      <path d="M179 510L181 543H222" fill="none" stroke="#fff" strokeWidth="2" />
      <path d="M231 487v-34q0-5 4-6v-6h8v6q4 1 4 6v34z" />
      <path d="M249 439L305 424M250 442H306M249 445L305 461" stroke="#000" strokeWidth="2" strokeDasharray="5 2" fill="none" />
    </svg>
  );
}

function BurglarIcon() {
  return (
    <svg viewBox="60 57 246 246" className="size-[82px] shrink-0" fill="none" stroke="#000" strokeWidth="8" strokeLinejoin="round">
      <path d="M67 61H302V224H67z" />
      <path d="M82 76H287V209H82z" />
      <path
        d="M145 142L213 108L228 73C231 64 248 66 247 78L235 124L200 143L213 184L253 209L218 213L233 238L216 290C212 300 191 298 193 283L210 240L182 215L153 172L127 220C121 231 104 226 109 213z"
        fill="#fff"
      />
      <path d="M153 172L176 212H132z" fill="#fff" />
      <path d="M213 184L256 209H213" />
      <circle cx="153" cy="104" r="24" fill="#fff" />
    </svg>
  );
}

function TheftIcon() {
  return (
    <svg viewBox="60 408 246 246" className="size-[82px] shrink-0">
      <circle cx="157" cy="444" r="22" />
      <circle cx="255" cy="435" r="22" />
      <path d="M118 472C126 469 132 471 156 479C163 482 165 487 167 494L176 518L205 537L199 550L168 533C163 530 161 526 158 520L150 546L162 568C165 573 166 577 167 584L172 632C173 648 153 650 151 635L146 590L132 564L131 588C130 594 128 598 124 603L101 640C92 651 77 641 83 629L108 587L105 552L112 511L101 518L93 552C89 566 71 562 72 548L80 511C82 506 84 502 88 498z" />
      <path d="M208 537L222 544L229 542V572L203 557z" />
      <path d="M233 476Q234 466 244 465H262Q270 466 272 474L296 563C299 577 281 580 278 568L271 545L287 633C288 647 270 650 267 636L254 556L252 636C251 649 233 649 232 636z" />
    </svg>
  );
}

function WifiIcon() {
  return (
    <svg viewBox="0 0 58 42" className="h-[42px] w-[58px]">
      <path d="M29 0C40 0 50 4.500 57.500 12c.6.600.6 1.500 0 2.100l-3.600 3.700c-.6.600-1.500.6-2.100 0C45.500 11.800 37.500 8.300 29 8.300S12.500 11.800 6.200 17.800c-.6.600-1.500.6-2.100 0L.5 14.100c-.6-.6-.6-1.500 0-2.100C8 4.500 18 0 29 0z" />
      <path d="M29 14c7.300 0 13.900 2.900 18.800 7.600.6.600.6 1.500 0 2.100l-3.700 3.700c-.6.600-1.500.6-2.100 0C38.500 24.200 34 22.300 29 22.300s-9.500 1.900-13 5.100c-.6.600-1.500.6-2.100 0l-3.700-3.700c-.6-.6-.6-1.500 0-2.100C15.100 16.900 21.700 14 29 14z" />
      <path d="M29 28c3.500 0 6.700 1.400 9.100 3.600.6.600.6 1.500 0 2.100l-8 7.900c-.6.600-1.600.6-2.200 0l-8-7.900c-.6-.6-.6-1.500 0-2.100C22.300 29.400 25.500 28 29 28z" />
    </svg>
  );
}

function AppleIcon() {
  return (
    <svg viewBox="0 0 30 37" className="h-[37px] w-[30px]" fill="currentColor">
      <path d="M21 0c.4 3.500-2.600 8-7 8C13.600 4 17 .600 21 0zM15.500 10.500c1.500 0 3.800-2 7-1.800 2.400.1 4.500 1 6 3.200-5 3-4.200 10.300 1.200 12.600C28.500 28.500 25.500 36 21.500 36.500c-2.500.2-3.300-1.500-6.200-1.500s-4 1.600-6.300 1.500C4.500 36 .500 28 .5 21.500c0-8 4.500-12.300 8.800-12.600 2.700-.1 4.700 1.600 6.200 1.600z" />
    </svg>
  );
}

/* ---------- Page ---------- */

const CRIMES = [
  { label: "Violent Crimes", count: 106, Icon: KnifeIcon },
  { label: "Anti Social Behaviour", count: 65, Icon: SprayIcon },
  { label: "Burglary", count: 20, Icon: BurglarIcon },
  { label: "Personal Theft", count: 11, Icon: TheftIcon },
];

function StatusBar() {
  return (
    <header className="grid grid-cols-[1fr_378px_1fr] items-center pt-[33px]">
      <div className="pl-7 text-center text-[53px] font-semibold leading-[60px]">10:17</div>
      <div className="h-[111px] rounded-full bg-black" />
      <div className="flex items-center justify-center gap-[22px] pr-8">
        <div className="flex gap-[6px] self-end">
          {[0, 1, 2, 3].map((i) => (
            <span key={i} className="h-[11px] w-[12px] rounded-[4px] bg-[#c9c9c9]" />
          ))}
        </div>
        <WifiIcon />
        <div className="flex items-center gap-[3px]">
          <div className="h-[43px] w-[86px] rounded-[14px] border-3 border-[#9a9a9a] p-[3px]">
            <div className="h-full rounded-[9px] bg-black" />
          </div>
          <span className="h-[14px] w-[5px] rounded-r-full bg-[#9a9a9a]" />
        </div>
      </div>
    </header>
  );
}

export default function App() {
  return (
    <div className="flex min-h-screen flex-col bg-white font-['Inter',sans-serif] text-black">
      <StatusBar />

      <main className="flex grow flex-col">
        <h1 className="px-[60px] pt-[160px] text-[97px] font-bold leading-[124px]">Crime Risk UK</h1>
        <p className="px-12 pt-[67px] text-[48px] leading-[66px]">
          Shows crime statistics for crimes withing one mile of you.
        </p>
        <p className="px-12 pt-[114px] text-[43px] italic leading-[60px]">
          Whilst (potentially) useful in England, please note these stats are not representative in Scotland as only
          figures from the British Transport Police will be shown.
        </p>

        <h2 className="pt-[111px] text-center text-[44px] font-semibold leading-[60px] text-[#34c759]">
          RISK LEVEL: LOW RISK (but always stay aware)
        </h2>

        <section className="relative mx-[30px] mt-[25px] border-[15px] border-[#34c759]">
          <StreetMap />
          <div className="absolute inset-x-0 top-[60px] flex flex-col items-center gap-[9px] text-white">
            <p className="bg-black/50 text-[49px] font-semibold leading-[61px]">Total Crimes: 391</p>
            <p className="bg-black/50 text-[31px] leading-[36px]">*These are for the most recent month on record</p>
          </div>
          <span className="absolute left-[51%] top-[47%] size-[66px] -translate-x-1/2 -translate-y-1/2 rounded-full border-[13px] border-white bg-[#ff2d55] shadow-[0_4px_18px_rgba(0,0,0,0.3)]" />
          <div className="absolute bottom-[6px] left-[17px] flex items-center gap-7 text-black/60">
            <span className="flex items-center gap-[3px]">
              <AppleIcon />
              <span className="text-[44px] font-medium leading-[52px]">Maps</span>
            </span>
            <a href="#legal" className="text-[28px] font-semibold leading-[36px] text-black/50 underline underline-offset-4">
              Legal
            </a>
          </div>
        </section>

        <ul className="flex flex-col gap-[35px] px-[50px] pt-[37px]">
          {CRIMES.map(({ label, count, Icon }) => (
            <li key={label} className="flex items-center gap-6 text-[48px] leading-[66px]">
              <Icon />
              <span>
                {label}: {count}
              </span>
            </li>
          ))}
        </ul>

        <button type="button" className="mt-[75px] self-center text-[48px] leading-[66px] text-[#593180]">
          Get Crime Stats
        </button>
      </main>

      <footer className="flex justify-center pb-6">
        <div className="h-[15px] w-[462px] rounded-full bg-linear-to-b from-[#555555] to-[#858585]" />
      </footer>
    </div>
  );
}
